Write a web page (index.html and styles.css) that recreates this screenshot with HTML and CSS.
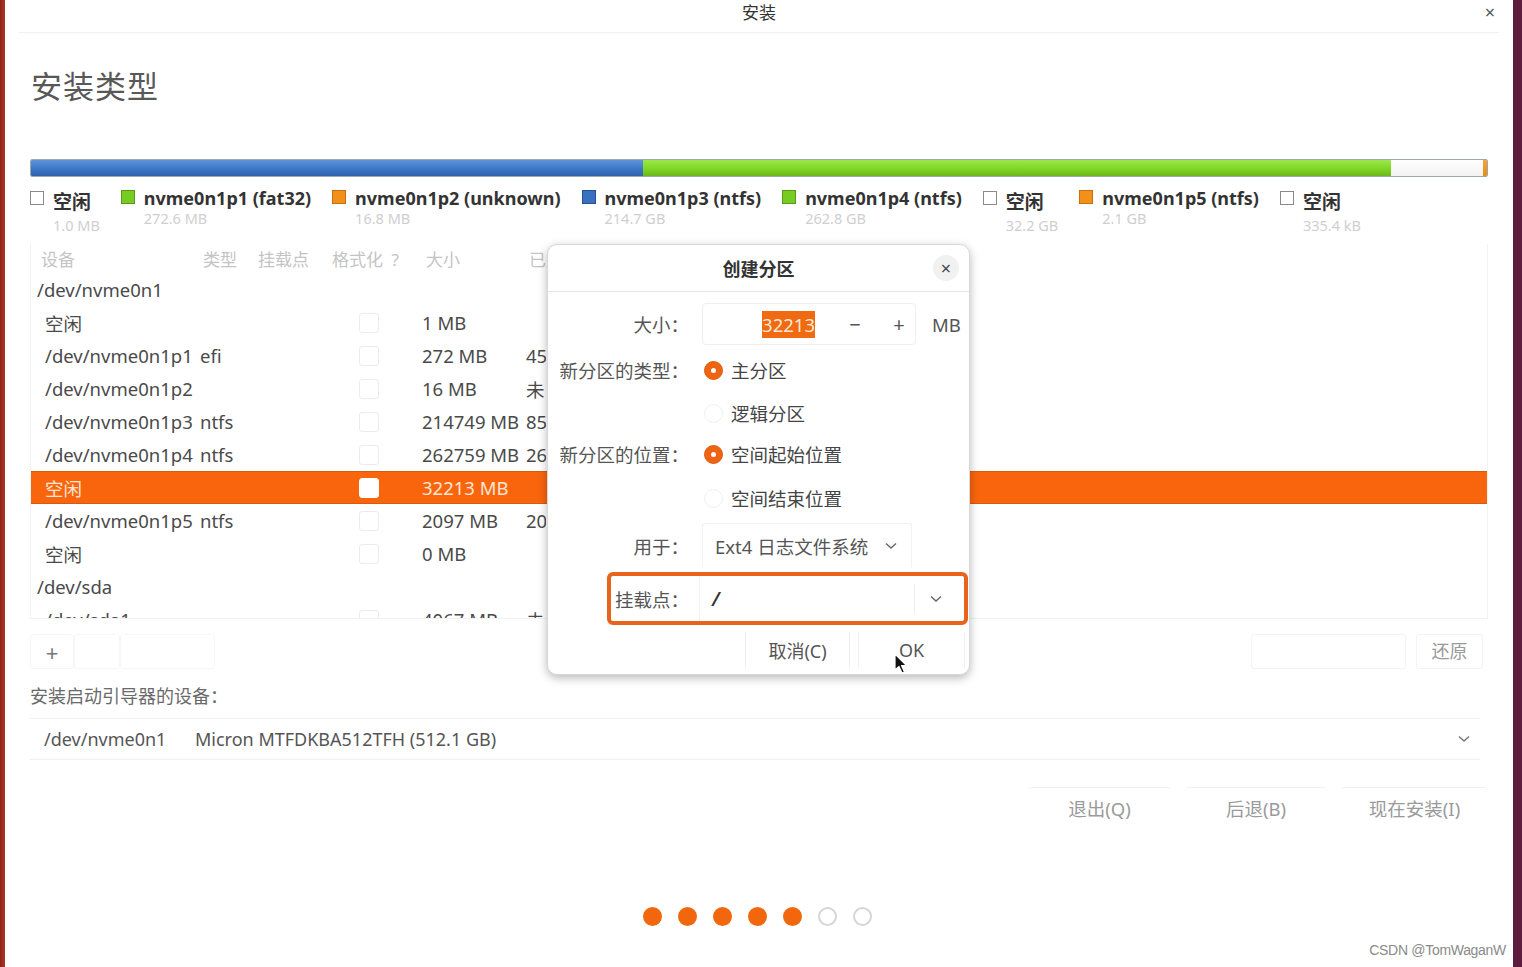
FILE: index.html
```html
<!DOCTYPE html>
<html lang="zh">
<head>
<meta charset="utf-8">
<title>安装</title>
<link rel="stylesheet" href="styles.css">
</head>
<body>
<div class="screen">
  <div class="edge-left"></div>
  <div class="window">
    <div class="titlebar">
      <span></span>
      <span class="win-title">安装</span>
      <span class="win-close">×</span>
    </div>
    <div class="content">
      <h1 class="heading">安装类型</h1>

      <div class="pbar">
        <div class="seg seg-blue" style="width:612px"></div>
        <div class="seg seg-green" style="width:748px"></div>
        <div class="seg seg-free" style="width:92px"></div>
        <div class="seg seg-orange" style="width:5px"></div>
      </div>

      <div class="legend">
        <div class="lg free"><span class="sq sq-free"></span><div><div class="lg-name">空闲</div><div class="lg-size">1.0 MB</div></div></div>
        <div class="lg"><span class="sq sq-green"></span><div><div class="lg-name">nvme0n1p1 (fat32)</div><div class="lg-size">272.6 MB</div></div></div>
        <div class="lg"><span class="sq sq-orange"></span><div><div class="lg-name">nvme0n1p2 (unknown)</div><div class="lg-size">16.8 MB</div></div></div>
        <div class="lg"><span class="sq sq-blue"></span><div><div class="lg-name">nvme0n1p3 (ntfs)</div><div class="lg-size">214.7 GB</div></div></div>
        <div class="lg"><span class="sq sq-green"></span><div><div class="lg-name">nvme0n1p4 (ntfs)</div><div class="lg-size">262.8 GB</div></div></div>
        <div class="lg free"><span class="sq sq-free"></span><div><div class="lg-name">空闲</div><div class="lg-size">32.2 GB</div></div></div>
        <div class="lg"><span class="sq sq-orange"></span><div><div class="lg-name">nvme0n1p5 (ntfs)</div><div class="lg-size">2.1 GB</div></div></div>
        <div class="lg free"><span class="sq sq-free"></span><div><div class="lg-name">空闲</div><div class="lg-size">335.4 kB</div></div></div>
      </div>

      <div class="table">
        <div class="thead">
          <span class="h-dev">设备</span>
          <span class="h-type">类型</span>
          <span class="h-mount">挂载点</span>
          <span class="h-fmt">格式化 ?</span>
          <span class="h-size">大小</span>
          <span class="h-used">已用</span>
        </div>
        <div class="row group"><span class="c-dev">/dev/nvme0n1</span></div>
        <div class="row"><span class="c-dev">空闲</span><span class="c-type"></span><span class="c-chk"><i class="cb"></i></span><span class="c-size">1 MB</span><span class="c-used"></span></div>
        <div class="row"><span class="c-dev">/dev/nvme0n1p1</span><span class="c-type">efi</span><span class="c-chk"><i class="cb"></i></span><span class="c-size">272 MB</span><span class="c-used">45</span></div>
        <div class="row"><span class="c-dev">/dev/nvme0n1p2</span><span class="c-type"></span><span class="c-chk"><i class="cb"></i></span><span class="c-size">16 MB</span><span class="c-used">未</span></div>
        <div class="row"><span class="c-dev">/dev/nvme0n1p3</span><span class="c-type">ntfs</span><span class="c-chk"><i class="cb"></i></span><span class="c-size">214749 MB</span><span class="c-used">85</span></div>
        <div class="row"><span class="c-dev">/dev/nvme0n1p4</span><span class="c-type">ntfs</span><span class="c-chk"><i class="cb"></i></span><span class="c-size">262759 MB</span><span class="c-used">26</span></div>
        <div class="row selected"><span class="c-dev">空闲</span><span class="c-type"></span><span class="c-chk"><i class="cb"></i></span><span class="c-size">32213 MB</span><span class="c-used"></span></div>
        <div class="row"><span class="c-dev">/dev/nvme0n1p5</span><span class="c-type">ntfs</span><span class="c-chk"><i class="cb"></i></span><span class="c-size">2097 MB</span><span class="c-used">20</span></div>
        <div class="row"><span class="c-dev">空闲</span><span class="c-type"></span><span class="c-chk"><i class="cb"></i></span><span class="c-size">0 MB</span><span class="c-used"></span></div>
        <div class="row group"><span class="c-dev">/dev/sda</span></div>
        <div class="row"><span class="c-dev">/dev/sda1</span><span class="c-type"></span><span class="c-chk"><i class="cb"></i></span><span class="c-size">4067 MB</span><span class="c-used">未</span></div>
      </div>

      <div class="toolbar">
        <div class="tb-left">
          <span class="tbtn tb-plus">+</span>
          <span class="tbtn tb-blank1"></span>
          <span class="tbtn tb-blank2"></span>
        </div>
        <div class="tb-right">
          <span class="tbtn tb-blank3"></span>
          <span class="tbtn tb-revert">还原</span>
        </div>
      </div>

      <div class="boot-label">安装启动引导器的设备<span class="colon">：</span></div>
      <div class="boot-combo">
        <span class="bc-dev">/dev/nvme0n1</span>
        <span class="bc-name">Micron MTFDKBA512TFH (512.1 GB)</span>
        <svg class="chev bc-chev" width="12" height="8" viewBox="0 0 12 8"><path d="M1 1.5 L6 6 L11 1.5" fill="none" stroke="#777" stroke-width="1.4"/></svg>
      </div>

      <div class="actions">
        <span class="abtn a-quit">退出(Q)</span>
        <span class="abtn a-back">后退(B)</span>
        <span class="abtn a-install">现在安装(I)</span>
      </div>

      <div class="dots">
        <i class="dot on"></i><i class="dot on"></i><i class="dot on"></i><i class="dot on"></i><i class="dot on"></i><i class="dot"></i><i class="dot"></i>
      </div>
    </div>
  </div>
  <div class="edge-right"></div>

  <div class="dialog">
    <div class="dlg-head">
      <span></span>
      <span class="dlg-title">创建分区</span>
      <span class="dlg-close">×</span>
    </div>
    <div class="dlg-body">
      <div class="frow r-size">
        <span class="flabel">大小<span class="colon">：</span></span>
        <div class="fctl">
          <div class="spin">
            <span class="spin-val"><span class="sel">32213</span></span>
            <span class="spin-btn">−</span>
            <span class="spin-btn">+</span>
          </div>
          <span class="unit">MB</span>
        </div>
      </div>
      <div class="frow r-t1">
        <span class="flabel">新分区的类型<span class="colon">：</span></span>
        <div class="fctl"><i class="radio on"></i><span>主分区</span></div>
      </div>
      <div class="frow r-t2">
        <span class="flabel"></span>
        <div class="fctl"><i class="radio"></i><span>逻辑分区</span></div>
      </div>
      <div class="frow r-p1">
        <span class="flabel">新分区的位置<span class="colon">：</span></span>
        <div class="fctl"><i class="radio on"></i><span>空间起始位置</span></div>
      </div>
      <div class="frow r-p2">
        <span class="flabel"></span>
        <div class="fctl"><i class="radio"></i><span>空间结束位置</span></div>
      </div>
      <div class="frow r-use">
        <span class="flabel">用于<span class="colon">：</span></span>
        <div class="fctl">
          <div class="combo">
            <span>Ext4 日志文件系统</span>
            <svg class="chev" width="12" height="8" viewBox="0 0 12 8"><path d="M1 1.5 L6 6 L11 1.5" fill="none" stroke="#666" stroke-width="1.4"/></svg>
          </div>
        </div>
      </div>
      <div class="mount-mark">
        <span class="flabel mlabel">挂载点<span class="colon">：</span></span>
        <div class="mentry">
          <span class="mval">/</span>
          <span class="msep"></span>
          <svg class="chev" width="12" height="8" viewBox="0 0 12 8"><path d="M1 1.5 L6 6 L11 1.5" fill="none" stroke="#666" stroke-width="1.4"/></svg>
        </div>
      </div>
      <div class="dlg-btns">
        <span class="dbtn">取消(C)</span>
        <span class="dbtn">OK</span>
      </div>
    </div>
  </div>

  <svg class="cursor" width="14" height="22" viewBox="0 0 14 22"><path d="M1 1 L1 17 L5 13.5 L8 20 L10.5 19 L7.5 12.5 L12.5 12.5 Z" fill="#111" stroke="#fff" stroke-width="1.2" stroke-linejoin="round"/></svg>

  <div class="watermark">CSDN @TomWaganW</div>
</div>
</body>
</html>
```

FILE: styles.css
```css
* { box-sizing: border-box; }
html, body { margin: 0; padding: 0; }
body {
  font-family: "Noto Sans", "Noto Sans CJK SC", sans-serif;
  color: #444;
  background: #fff;
}
.colon { font-family: "Noto Sans CJK TC", "Noto Sans CJK SC", sans-serif; }
.screen {
  position: relative;
  width: 1522px;
  height: 967px;
  overflow: hidden;
  display: flex;
}
.edge-left { width: 5px; background: linear-gradient(90deg, #8e2418, #a8382a); flex: none; }
.edge-right { width: 9px; background: #5c1c3e; flex: none; }
.window { flex: 1; background: #fff; display: flex; flex-direction: column; min-width: 0; }

.titlebar {
  height: 33px;
  margin: 0 14px;
  display: grid;
  grid-template-columns: 1fr auto 1fr;
  align-items: center;
  border-bottom: 1px solid #f1f1f1;
}
.win-title { font-size: 17px; color: #333; line-height: 20px; margin-top: -6px; }
.win-close { justify-self: end; font-size: 18px; color: #555; margin-right: 4px; margin-top: -8px; }

.content { padding: 0 25px; display: flex; flex-direction: column; }
.heading {
  margin: 33px 0 0 1px;
  font-size: 31px;
  font-weight: 400;
  line-height: 40px;
  color: #585858;
  letter-spacing: 1px;
}

.pbar {
  margin-top: 53px;
  height: 18px;
  display: flex;
  border: 1px solid #9aa;
  border-radius: 2px;
  overflow: hidden;
}
.seg { height: 100%; flex: none; }
.seg-blue { background: linear-gradient(#5d95dc, #3a74c4 60%, #2f63ad); }
.seg-green { background: linear-gradient(#9be84a, #7ed321 60%, #6ab81a); }
.seg-free { background: linear-gradient(#fff, #f2f2f2); }
.seg-orange { background: linear-gradient(#f7a23a, #e88a16); }

.legend { margin-top: 11px; display: flex; gap: 21px; }
.lg { display: flex; gap: 9px; align-items: flex-start; }
.sq { width: 14px; height: 14px; flex: none; margin-top: 2px; border: 1px solid; }
.sq-free { background: #fff; border-color: #8a8a8a; margin-top: 3px; }
.sq-green { background: #77cc22; border-color: #5a9a1a; }
.sq-orange { background: #f39019; border-color: #c87010; }
.sq-blue { background: #3a70c0; border-color: #2a5090; }
.lg-name { font-size: 18px; font-weight: 700; line-height: 21px; color: #333; }
.lg-size { font-size: 14.5px; line-height: 18px; color: #cfcfcf; margin-top: 0; }
.lg.free .lg-name { margin-top: 4px; font-size: 19px; }
.lg.free .lg-size { margin-top: 3px; }

.table {
  margin-top: 10px;
  height: 375px;
  overflow: hidden;
  border: 1px solid #f2f2f2;
  border-top: none;
  font-size: 18.5px;
}
.thead {
  height: 29px;
  display: flex;
  align-items: center;
  padding-left: 10px;
  color: #c4c4c4;
  font-size: 17px;
  white-space: nowrap;
}
.h-dev { width: 162px; }
.h-type { width: 55px; }
.h-mount { width: 74px; }
.h-fmt { width: 94px; word-spacing: 4px; }
.h-size { width: 103px; }
.h-used { width: 19px; overflow: hidden; }
.row {
  height: 33px;
  display: flex;
  align-items: center;
  padding-left: 14px;
  color: #4a4a4a;
  white-space: nowrap;
}
.row.group { padding-left: 6px; }
.c-dev { width: 155px; flex: none; }
.c-type { width: 159px; flex: none; }
.c-chk { width: 63px; flex: none; display: flex; }
.c-size { width: 104px; flex: none; }
.c-used { width: 20px; flex: none; overflow: hidden; }
.cb {
  width: 20px; height: 20px;
  border: 1px solid #ececec;
  border-radius: 3px;
  background: #fff;
}
.row.selected { background: #f9650d; color: #ffe6d6; box-shadow: inset 0 1px 0 #d85a10, inset 0 -1px 0 #d85a10; }
.row.selected .cb { border-color: #fff; }

.toolbar {
  margin-top: 15px;
  height: 35px;
  display: flex;
  justify-content: space-between;
}
.tb-left, .tb-right { display: flex; }
.tb-right { margin-right: 5px; }
.tbtn {
  height: 35px;
  display: flex;
  align-items: center;
  justify-content: center;
  border: 1px solid #f3f3f3;
  border-radius: 3px;
  color: #999;
  font-size: 18px;
}
.tb-plus { width: 44px; font-size: 22px; color: #777; border-color: #f6f6f6; }
.tb-blank1 { width: 46px; border-color: #f7f7f7; }
.tb-blank2 { width: 95px; border-color: #f7f7f7; }
.tb-blank3 { width: 155px; margin-right: 10px; }
.tb-revert { width: 67px; color: #9a9a9a; padding-bottom: 3px; }

.boot-label { margin-top: 15px; line-height: 22px; font-size: 18px; color: #6a6a6a; }
.boot-combo {
  margin-top: 11px;
  height: 42px;
  margin-right: 8px;
  display: flex;
  align-items: center;
  padding-left: 14px;
  padding-right: 10px;
  border-top: 1px solid #f1f1f1;
  border-bottom: 1px solid #f1f1f1;
  font-size: 18px;
  color: #555;
}
.bc-dev { width: 151px; }
.bc-name { flex: 1; }

.actions {
  margin-top: 27px;
  height: 40px;
  display: flex;
  justify-content: flex-end;
  gap: 15px;
}
.abtn {
  display: flex;
  align-items: center;
  justify-content: center;
  border-top: 1px solid #f0f0f0;
  border-radius: 4px;
  color: #9a9a9a;
  font-size: 18.5px;
}
.a-quit { width: 143px; }
.a-back { width: 140px; }
.a-install { width: 147px; }

.dots {
  margin-top: 80px;
  display: flex;
  justify-content: center;
  gap: 16px;
  padding-right: 3px;
}
.dot {
  width: 19px; height: 19px;
  border-radius: 50%;
  border: 2px solid #d6d6d6;
  background: #fff;
}
.dot.on { background: #f2660e; border-color: #f0690f; }

/* dialog overlay */
.dialog {
  position: absolute;
  left: 547px;
  top: 244px;
  width: 423px;
  height: 431px;
  background: #fff;
  border: 1px solid #d8d8d8;
  border-radius: 10px;
  box-shadow: 0 3px 10px rgba(0,0,0,0.28);
  display: flex;
  flex-direction: column;
}
.dlg-head {
  height: 47px;
  flex: none;
  display: grid;
  grid-template-columns: 1fr auto 1fr;
  align-items: center;
  border-bottom: 1px solid #e6e6e6;
}
.dlg-title { font-size: 18px; font-weight: 700; color: #333; }
.dlg-close {
  justify-self: end;
  margin-right: 10px;
  width: 26px; height: 26px;
  border-radius: 50%;
  background: #f1f1f1;
  display: flex; align-items: center; justify-content: center;
  font-size: 18px; color: #444;
}
.dlg-body { padding-top: 11px; display: flex; flex-direction: column; font-size: 18.5px; color: #444; }
.frow {
  display: grid;
  grid-template-columns: 141px 1fr;
  column-gap: 13px;
  align-items: center;
}
.flabel { text-align: right; white-space: nowrap; color: #555; }
.fctl { display: flex; align-items: center; gap: 8px; }
.r-size { height: 42px; }
.r-t1 { height: 30px; margin-top: 10px; }
.r-t2 { height: 30px; margin-top: 13px; }
.r-p1 { height: 30px; margin-top: 11px; }
.r-p2 { height: 30px; margin-top: 14px; }
.r-use { height: 45px; margin-top: 10px; }

.spin {
  width: 214px; height: 42px;
  border: 1px solid #efefef;
  border-radius: 4px;
  display: flex; align-items: center;
}
.spin-val { flex: 1; text-align: right; padding-right: 12px; }
.sel { background: #ef6a10; color: #fde7d5; padding: 1px 0; }
.spin-btn { width: 32px; margin-left: 12px; text-align: center; font-size: 20px; color: #555; }
.unit { margin-left: 8px; color: #555; }

.radio {
  width: 19px; height: 19px;
  border-radius: 50%;
  border: 1px solid #f0f0f0;
  margin-left: 2px;
  flex: none;
  position: relative;
}
.radio.on { background: #ef6412; border-color: #e05a0c; }
.radio.on::after {
  content: "";
  position: absolute;
  left: 6px; top: 6px;
  width: 5px; height: 5px;
  border-radius: 50%;
  background: #fff;
}
.combo {
  width: 210px; height: 45px;
  border-left: 1px solid #f2f2f2;
  border-right: 1px solid #f2f2f2;
  border-top: 1px solid #f2f2f2;
  border-radius: 3px;
  display: flex; align-items: center; justify-content: space-between;
  padding: 0 14px 0 12px;
  color: #555;
}

.mount-mark {
  margin: 4px 1px 0 59px;
  height: 53px;
  border: 4px solid #e8641c;
  border-radius: 6px;
  display: flex;
  align-items: center;
}
.mlabel { width: 78px; flex: none; }
.mentry {
  margin-left: 10px;
  flex: 1;
  height: 100%;
  display: flex;
  align-items: center;
  border-left: 1px solid #f1f1f1;
}
.mval { flex: 1; padding-left: 12px; font-size: 19px; color: #333; font-style: italic; font-weight: 600; }
.msep { width: 1px; height: 30px; background: #eee; margin-right: 15px; }
.mentry .chev { margin-right: 22px; }

.dlg-btns {
  margin-top: 7px;
  height: 36px;
  display: flex;
  justify-content: flex-end;
  gap: 8px;
  margin-right: 4px;
}
.dbtn {
  display: flex; align-items: center; justify-content: center;
  border-left: 1px solid #f0f0f0;
  border-right: 1px solid #f0f0f0;
  color: #555;
  font-size: 18px;
}
.dbtn:first-child { width: 105px; }
.dbtn:last-child { width: 107px; }

.cursor { position: absolute; left: 894px; top: 653px; }

.watermark {
  position: absolute;
  right: 16px;
  bottom: 9px;
  font-family: "Liberation Sans", sans-serif;
  font-size: 14px;
  color: #8a8a8a;
  letter-spacing: -0.3px;
}
```
